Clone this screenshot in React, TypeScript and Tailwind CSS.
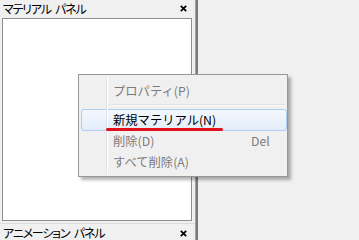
import React from "react";

const jp = { fontFamily: '"Noto Sans CJK JP", "Noto Sans", sans-serif' } as React.CSSProperties;
const palt = { fontFeatureSettings: '"palt"' } as React.CSSProperties;

function CloseX() {
  return (
    <svg width="7" height="7" viewBox="0 0 7 7" className="block">
      <path d="M0.8 0.8 L6.2 6.2 M6.2 0.8 L0.8 6.2" stroke="#000" strokeWidth="1.7" />
    </svg>
  );
}

function Item({
  label,
  disabled,
  active,
  shortcut,
  h,
}: {
  label: string;
  disabled?: boolean;
  active?: boolean;
  shortcut?: string;
  h: string;
}) {
  return (
    <div
      className={
        "ml-[2px] flex items-center text-[12.3px] leading-none " +
        h +
        " " +
        (active
          ? "rounded-[3px] border border-[#aecdf2] bg-gradient-to-b from-[#f4f8fd] to-[#e3edfa] text-black"
          : "border border-transparent " + (disabled ? "text-[#7c7c7c]" : "text-black"))
      }
    >
      <span className="ml-[31px] w-[138px] whitespace-nowrap">{label}</span>
      {shortcut && <span className="whitespace-nowrap">{shortcut}</span>}
    </div>
  );
}

export default function App() {
  return (
    <div className="relative flex h-[240px] w-[359px] overflow-hidden bg-[#f0f0f0]" style={jp}>
      {/* left panel */}
      <div className="flex w-[195px] flex-col">
        <div className="flex h-[18px] items-center justify-between pl-[3px] pr-[8px]">
          <span className="text-[12px] leading-none tracking-[-1.2px] [word-spacing:3px] text-black" style={palt}>
            マテリアル パネル
          </span>
          <CloseX />
        </div>
        <div className="ml-[2px] mr-[3px] h-[205px] border border-[#8b8e94] bg-white" />
        <div className="mt-[2px] h-px bg-[#dadada]" />
        <div className="flex h-[16px] items-start justify-between pl-[3px] pr-[8px] pt-[3px]">
          <span className="text-[12px] leading-none tracking-[-1.2px] [word-spacing:3px] text-black" style={palt}>
            アニメーション パネル
          </span>
          <div className="pt-[3px]">
            <CloseX />
          </div>
        </div>
      </div>
      {/* divider */}
      <div className="flex w-[3px]">
        <div className="w-px bg-[#a0a0a0]" />
        <div className="w-[2px] bg-[#7a7a7a]" />
      </div>
      <div className="flex-1" />

      {/* context menu */}
      <div className="absolute left-[78px] top-[74px] w-[210px] border border-[#979797] bg-[#f0f0f0] pb-[3px] pt-[5px] shadow-[3px_3px_3px_rgba(0,0,0,0.3)]">
        <div className="absolute bottom-[2px] left-[27px] top-[2px] w-px bg-[#e2e3e3]" />
        <div className="absolute bottom-[2px] left-[28px] top-[2px] w-px bg-white" />
        <Item label="プロパティ(P)" disabled h="h-[22px]" />
        <div className="relative h-[7px]">
          <div className="absolute left-[34px] right-[2px] top-[2px] h-px bg-[#e0e0e0]" />
          <div className="absolute left-[34px] right-[2px] top-[3px] h-px bg-white" />
        </div>
        <Item label="新規マテリアル(N)" active h="h-[22px]" />
        <Item label="削除(D)" disabled shortcut="Del" h="h-[21px]" />
        <Item label="すべて削除(A)" disabled h="h-[21px]" />
      </div>

      {/* red annotation underline */}
      <div className="absolute left-[106px] top-[128px] h-[3px] w-[117px] rounded-full bg-[#e3101b]" />
    </div>
  );
}
